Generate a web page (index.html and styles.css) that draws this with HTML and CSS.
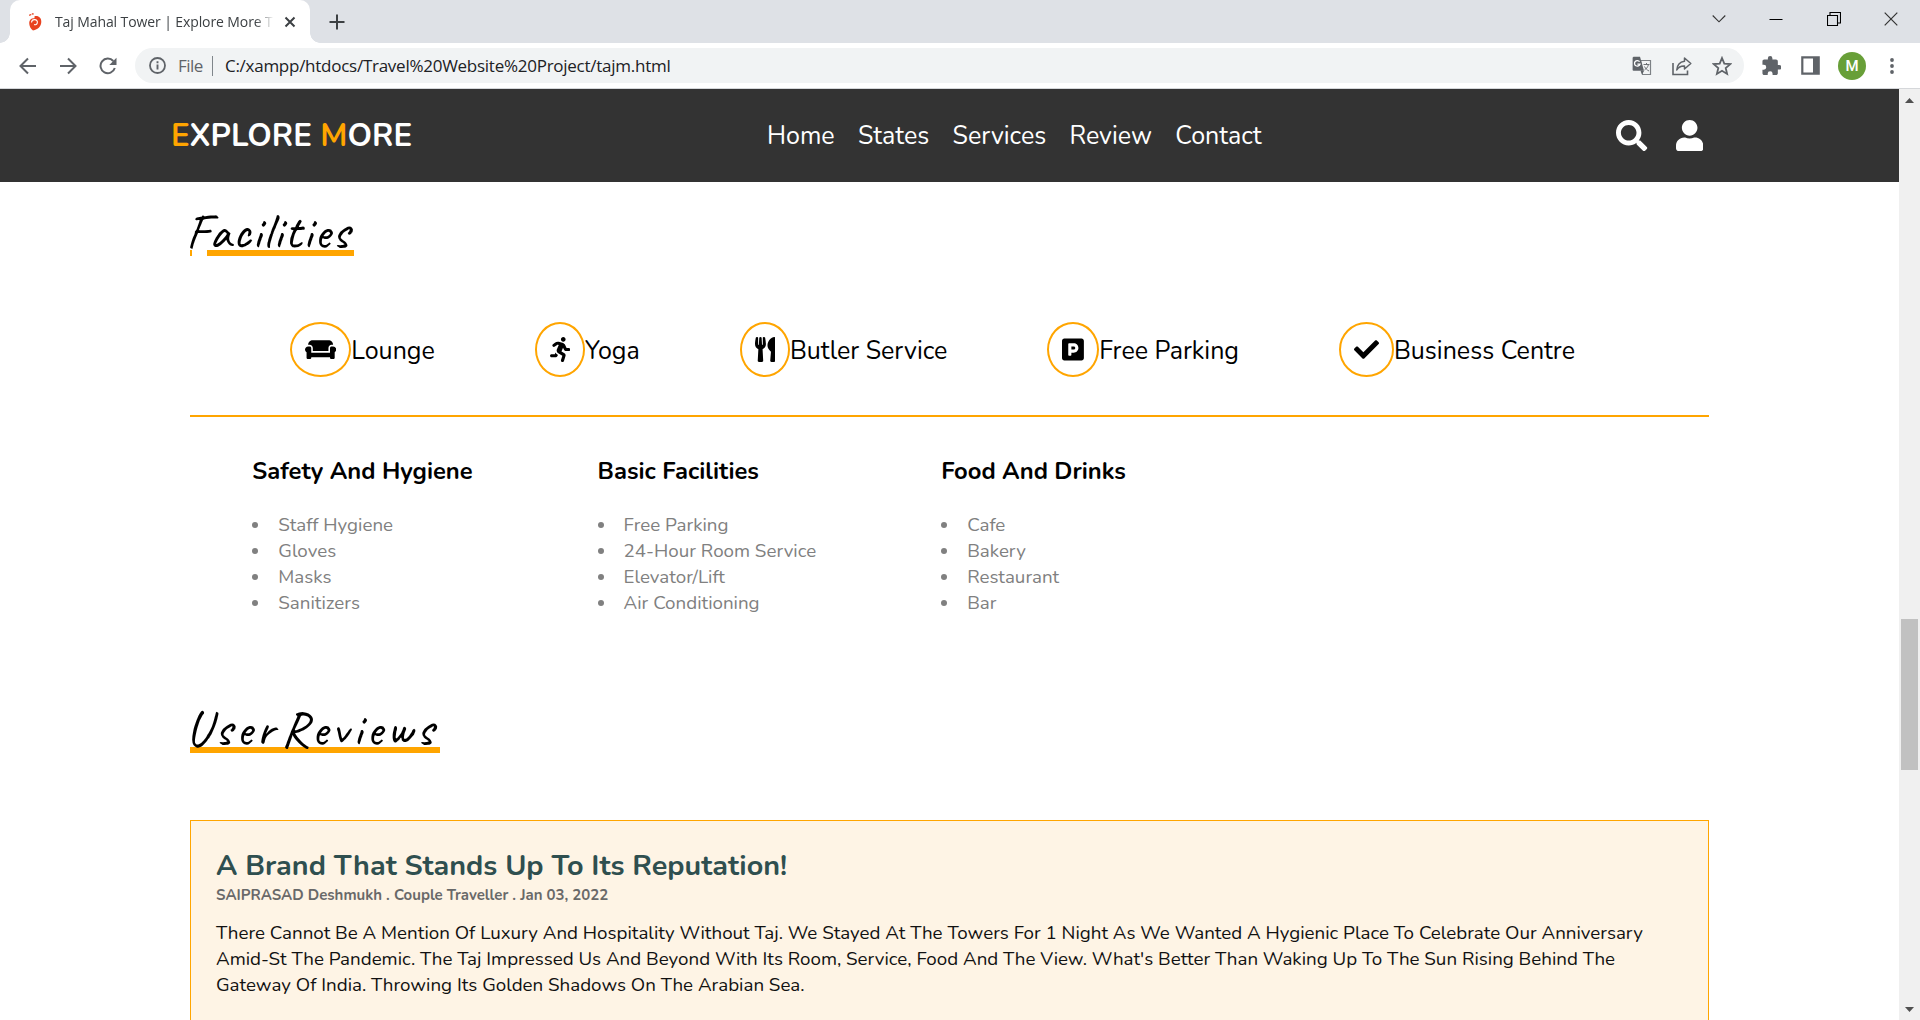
FILE: index.html
```html
<!DOCTYPE html>
<html lang="en">
<head>
<meta charset="utf-8">
<title>Taj Mahal Tower | Explore More</title>
<link rel="stylesheet" href="styles.css">
</head>
<body>
<div class="tabstrip">
  <div class="tab">
    <svg class="favicon" viewBox="0 0 14 18"><path d="M6.500 3.200C10.800 2.400 13.500 5 13.300 9c-.2 4-3 7.500-8.300 8.500C2.500 16 1.200 13 1.200 9.800c0-2.800 2-4.600 4.400-4.600 2.500 0 4 1.500 4 3.500S8.200 11.800 6.500 11.600" fill="#e8421f"/><path d="M3.500 9.500c.2-2 1.500-3 3.200-2.900 1.900.1 3 1.600 2.600 3.300-.3 1.500-1.800 2.300-3.200 1.700" fill="none" stroke="#fff" stroke-width="1.100"/><path d="M1.200 2.300l2-.8M3.800.8l1.800.2" stroke="#e8421f" stroke-width="1.300"/></svg>
    <span class="tab-title">Taj Mahal Tower | Explore More Tr</span>
    <svg class="tab-close" viewBox="0 0 12 12"><path d="M1.500 1.500l9 9M10.500 1.500l-9 9" stroke="#3c4043" stroke-width="2"/></svg>
  </div>
  <svg class="new-tab" viewBox="0 0 16 16"><path d="M8 0.500v15M.5 8h15" stroke="#3c4043" stroke-width="2"/></svg>
  <div class="controls">
    <svg width="14" height="14" viewBox="0 0 14 14"><path d="M.7 3.500L7 9.800l6.300-6.300" fill="none" stroke="#333" stroke-width="1.100"/></svg>
    <svg width="14" height="14" viewBox="0 0 14 14"><path d="M.5 7.500h13" stroke="#000"/></svg>
    <svg width="14" height="14" viewBox="0 0 14 14"><path d="M.5 3.500h10v10H.5zM3 3V.5h10.500v10.500H11" fill="none" stroke="#000" stroke-width="1.100"/></svg>
    <svg width="14" height="14" viewBox="0 0 14 14"><path d="M.7.7l12.600 12.600M13.300.7L.7 13.300" stroke="#333" stroke-width="1.200"/></svg>
  </div>
</div>
<div class="toolbar">
  <div class="nav-buttons">
    <svg width="18" height="18" viewBox="0 0 18 18"><path d="M17 9H2M9 1.500L1.500 9 9 16.500" fill="none" stroke="#5f6368" stroke-width="2"/></svg>
    <svg width="18" height="18" viewBox="0 0 18 18"><path d="M1 9h15M9 1.500L16.500 9 9 16.500" fill="none" stroke="#5f6368" stroke-width="2"/></svg>
    <svg width="18" height="18" viewBox="0 0 18 18"><path d="M15.800 11A7.300 7.300 0 1 1 14.300 4" fill="none" stroke="#5f6368" stroke-width="2"/><path d="M17.500.8v7.200h-7.200z" fill="#5f6368"/></svg>
  </div>
  <div class="omnibox">
    <svg width="17" height="17" viewBox="0 0 17 17"><circle cx="8.500" cy="8.500" r="7.500" fill="none" stroke="#5f6368" stroke-width="1.800"/><path d="M8.500 7.500v5M8.500 4.300v1.900" stroke="#5f6368" stroke-width="1.900"/></svg>
    <span class="scheme">File</span>
    <span class="divider"></span>
    <span class="url">C:/xampp/htdocs/Travel%20Website%20Project/tajm.html</span>
    <div class="omni-actions">
      <svg width="20" height="20" viewBox="0 0 20 20"><path d="M8.500 4.500h10v14h-8z" fill="#f1f3f4" stroke="#7d8185" stroke-width="1.200"/><path d="M1.500.8h6.500l4 14H1.500A1 1 0 0 1 .6 14V1.700z" fill="#5f6368"/><path d="M8.600 15l3.400 0-2 3.600z" fill="#5f6368"/><path d="M7.600 5.700A2.800 2.800 0 1 0 8 8.200H5.400" fill="none" stroke="#fff" stroke-width="1.300"/><path d="M11.500 8.500h6M14.500 7v1.500M16.500 8.500c-.8 3-2.500 4.500-4 5.500M12.500 10.500c1 2 2.500 3.500 4.500 4.500" fill="none" stroke="#6d7175"/></svg>
      <svg width="20" height="20" viewBox="0 0 20 20"><path d="M1 7v11.500h14.500v-4" fill="none" stroke="#5f6368" stroke-width="1.600"/><path d="M12.500 2l6.300 5.500-6.300 5.500V10C9 9.800 6.500 11 4.800 14c.3-5 3.200-8.200 7.700-8.800z" fill="none" stroke="#5f6368" stroke-width="1.500" stroke-linejoin="round"/></svg>
      <svg width="20" height="20" viewBox="0 0 20 20"><path d="M10 2l2.300 5.600 6 .5-4.600 3.900 1.400 5.900L10 14.800l-5.100 3.100L6.300 12 1.700 8.100l6-.5z" fill="none" stroke="#5f6368" stroke-width="1.800"/></svg>
    </div>
  </div>
  <div class="extensions">
    <svg width="19" height="19" viewBox="1.500 1 21 21"><path d="M20.500 11H19V7c0-1.100-.9-2-2-2h-4V3.500a2.500 2.500 0 0 0-5 0V5H4c-1.100 0-2 .9-2 2v3.800h1.500a2.700 2.700 0 0 1 0 5.400H2V20c0 1.100.9 2 2 2h3.800v-1.500a2.700 2.700 0 0 1 5.400 0V22H17c1.100 0 2-.9 2-2v-4h1.500a2.500 2.500 0 0 0 0-5z" fill="#5f6368"/></svg>
    <svg width="19" height="19" viewBox="0 0 19 19"><path d="M1.300 1.300h16.400v16.400H1.300z" fill="#fff" stroke="#5f6368" stroke-width="2.200"/><path d="M12 1h6v17h-6z" fill="#5f6368"/></svg>
    <span class="avatar">M</span>
    <svg class="dots" width="4" height="18" viewBox="0 0 4 18"><g fill="#5f6368"><circle cx="2" cy="3" r="1.900"/><circle cx="2" cy="9" r="1.900"/><circle cx="2" cy="15" r="1.900"/></g></svg>
  </div>
</div>
<div class="viewport">
  <div class="page">
    <header class="navbar">
      <a class="logo"><span>E</span>XPLORE <span>M</span>ORE</a>
      <nav><a>Home</a><a>States</a><a>Services</a><a>Review</a><a>Contact</a></nav>
      <div class="icons">
        <svg width="31.250" height="31.250" viewBox="0 0 512 512"><path d="M505 442.700L405.300 343c-4.500-4.500-10.600-7-17-7H372c27.600-35.300 44-79.700 44-128C416 93.100 322.900 0 208 0S0 93.100 0 208s93.100 208 208 208c48.300 0 92.700-16.400 128-44v16.300c0 6.400 2.500 12.500 7 17l99.700 99.700c9.400 9.400 24.600 9.400 33.900 0l28.300-28.300c9.400-9.400 9.400-24.600.1-34zM208 336c-70.700 0-128-57.200-128-128 0-70.700 57.200-128 128-128 70.700 0 128 57.200 128 128 0 70.700-57.200 128-128 128z"/></svg>
        <svg width="27.340" height="31.250" viewBox="0 0 448 512"><path d="M224 256c70.700 0 128-57.300 128-128S294.700 0 224 0 96 57.300 96 128s57.300 128 128 128zm89.600 32h-16.700c-22.200 10.200-46.900 16-72.900 16s-50.600-5.800-72.900-16h-16.700C60.200 288 0 348.200 0 422.400V464c0 26.500 21.500 48 48 48h352c26.500 0 48-21.500 48-48v-41.600c0-74.200-60.200-134.400-134.400-134.400z"/></svg>
      </div>
    </header>
    <main>
      <h1 class="heading heading-facilities">Facilities</h1>
      <div class="facilities">
        <div class="facility"><span class="badge"><svg width="31.250" height="25" viewBox="0 0 640 512"><path d="M160 224v64h320v-64c0-35.300 28.700-64 64-64h32c0-53-43-96-96-96H160c-53 0-96 43-96 96h32c35.300 0 64 28.700 64 64zm416-32h-32c-17.700 0-32 14.300-32 32v96H128v-96c0-17.700-14.300-32-32-32H64c-35.300 0-64 28.700-64 64 0 23.600 13 44 32 55.100V432c0 8.800 7.200 16 16 16h64c8.800 0 16-7.200 16-16v-16h384v16c0 8.800 7.200 16 16 16h64c8.800 0 16-7.200 16-16V311.100c19-11.100 32-31.500 32-55.100 0-35.300-28.700-64-64-64z"/></svg></span><span class="label">Lounge</span></div>
        <div class="facility"><span class="badge"><svg width="20.310" height="25" viewBox="0 0 416 512"><path d="M272 96c26.510 0 48-21.490 48-48S298.510 0 272 0s-48 21.490-48 48 21.490 48 48 48zM113.690 317.470l-14.800 34.520H32c-17.670 0-32 14.330-32 32s14.330 32 32 32h77.450c19.250 0 36.580-11.440 44.110-29.090l8.790-20.520-10.670-6.300c-17.320-10.230-30.060-25.370-37.990-42.610zM384 223.990h-44.030l-26.060-53.250c-12.500-25.550-35.450-44.230-61.780-50.940l-71.080-21.140c-28.300-6.800-57.770-.55-80.840 17.140l-39.670 30.410c-14.030 10.750-16.690 30.830-5.940 44.860s30.840 16.690 44.860 5.940l39.660-30.410c7.670-5.890 17.440-8 25.270-6.140l14.700 4.370-37.460 87.390c-12.620 29.480-1.310 64.010 26.300 80.310l84.980 50.170-27.470 87.730c-5.280 16.860 4.110 34.820 20.970 40.090 3.190 1 6.410 1.480 9.580 1.480 13.610 0 26.230-8.770 30.520-22.450l31.640-101.060c5.910-20.770-2.890-43.080-21.640-54.390l-61.240-36.140 31.310-78.280 20.270 41.430c8 16.340 24.920 26.890 43.110 26.890H384c17.670 0 32-14.330 32-32s-14.330-31.990-32-31.990z"/></svg></span><span class="label">Yoga</span></div>
        <div class="facility"><span class="badge"><svg width="20.310" height="25" viewBox="0 0 416 512"><path d="M207.900 15.200c.8 4.700 16.100 94.500 16.100 128.800 0 52.300-27.800 89.600-68.900 104.600L168 486.700c.7 13.700-10.200 25.300-24 25.300H80c-13.700 0-24.700-11.500-24-25.300l12.900-238.100C27.700 233.600 0 196.200 0 144 0 109.600 15.300 19.900 16.100 15.200 19.300-5.100 61.400-5.400 64 16.300v141.200c1.300 3.400 15.100 3.200 16 0 1.400-25.300 7.900-139.200 8-141.800 3.300-20.800 44.700-20.800 47.900 0 .2 2.700 6.600 116.500 8 141.800.9 3.200 14.800 3.400 16 0V16.300c2.600-21.600 44.800-21.400 47.900-1.100zm119.200 285.700l-15 185.100c-1.200 14 9.900 26 23.900 26h56c13.300 0 24-10.700 24-24V24c0-13.200-10.700-24-24-24-82.500 0-221.400 178.500-64.900 300.900z"/></svg></span><span class="label">Butler Service</span></div>
        <div class="facility"><span class="badge"><svg width="21.880" height="25" viewBox="0 0 448 512"><path d="M400 32H48C21.500 32 0 53.500 0 80v352c0 26.500 21.500 48 48 48h352c26.500 0 48-21.500 48-48V80c0-26.500-21.500-48-48-48zM240 320h-48v48c0 8.800-7.200 16-16 16h-32c-8.800 0-16-7.200-16-16V144c0-8.800 7.200-16 16-16h96c52.900 0 96 43.100 96 96s-43.100 96-96 96zm0-128h-48v64h48c17.600 0 32-14.400 32-32s-14.400-32-32-32z"/></svg></span><span class="label">Free Parking</span></div>
        <div class="facility"><span class="badge"><svg width="25" height="25" viewBox="0 0 512 512"><path d="M173.898 439.404l-166.400-166.400c-9.997-9.997-9.997-26.206 0-36.204l36.203-36.204c9.997-9.998 26.207-9.998 36.204 0L192 312.690 432.095 72.596c9.997-9.997 26.207-9.997 36.204 0l36.203 36.204c9.997 9.997 9.997 26.206 0 36.204l-294.400 294.401c-9.998 9.997-26.207 9.997-36.204-.001z"/></svg></span><span class="label">Business Centre</span></div>
      </div>
      <div class="columns">
        <section><h3>Safety And Hygiene</h3><ul><li>Staff Hygiene</li><li>Gloves</li><li>Masks</li><li>Sanitizers</li></ul></section>
        <section><h3>Basic Facilities</h3><ul><li>Free Parking</li><li>24-Hour Room Service</li><li>Elevator/Lift</li><li>Air Conditioning</li></ul></section>
        <section><h3>Food And Drinks</h3><ul><li>Cafe</li><li>Bakery</li><li>Restaurant</li><li>Bar</li></ul></section>
      </div>
      <h1 class="heading heading-reviews">User Reviews</h1>
      <article class="review">
        <h2>A Brand That Stands Up To Its Reputation!</h2>
        <h5>SAIPRASAD Deshmukh . Couple Traveller . Jan 03, 2022</h5>
        <p>There Cannot Be A Mention Of Luxury And Hospitality Without Taj. We Stayed At The Towers For 1 Night As We Wanted A Hygienic Place To Celebrate Our Anniversary Amid-St The Pandemic. The Taj Impressed Us And Beyond With Its Room, Service, Food And The View. What's Better Than Waking Up To The Sun Rising Behind The Gateway Of India. Throwing Its Golden Shadows On The Arabian Sea.</p>
      </article>
    </main>
  </div>
  <div class="scrollbar">
    <svg width="9" height="5" viewBox="0 0 9 5"><path d="M0 5L4.500 0 9 5z" fill="#505050"/></svg>
    <div class="thumb"></div>
    <svg class="down" width="9" height="5" viewBox="0 0 9 5"><path d="M0 0h9L4.500 5z" fill="#505050"/></svg>
  </div>
</div>
</body>
</html>
```
FILE: styles.css
```css
* { box-sizing: border-box; margin: 0; padding: 0; }
body {
  width: 1920px; height: 1020px; overflow: hidden;
  display: flex; flex-direction: column;
  background: #fff; font-family: Nunito, Lato, sans-serif; color: #000;
}
svg { display: block; flex: none; }

/* Browser tab strip */
.tabstrip { height: 43px; flex: none; display: flex; align-items: center; background: #dee1e6; padding: 0 22px 0 10px; font-family: "Open Sans", "Noto Sans", sans-serif; }
.tab { position: relative; width: 300px; height: 43px; background: #fff; border-radius: 10px 10px 0 0; display: flex; align-items: center; padding: 0 14px 0 18px; }
.tab::before, .tab::after { content: ""; position: absolute; bottom: 0; width: 10px; height: 10px; }
.tab::before { left: -10px; background: radial-gradient(circle at 0 0, transparent 9.500px, #fff 10px); }
.tab::after { right: -10px; background: radial-gradient(circle at 100% 0, transparent 9.500px, #fff 10px); }
.favicon { width: 14px; height: 18px; margin-right: 13px; }
.tab-title { width: 219px; overflow: hidden; white-space: nowrap; font-size: 14px; letter-spacing: -0.100px; color: #3c4043; -webkit-mask-image: linear-gradient(90deg, #000 200px, transparent 219px); mask-image: linear-gradient(90deg, #000 200px, transparent 219px); }
.tab-close { width: 12px; height: 12px; margin-left: auto; }
.new-tab { width: 16px; height: 16px; margin-left: 19px; }
.controls { margin-left: auto; display: flex; gap: 43.500px; padding-bottom: 6px; }

/* Browser toolbar */
.toolbar { height: 46px; flex: none; display: flex; align-items: center; background: #fff; border-bottom: 1px solid #d5d7da; padding: 0 26px 0 19px; font-family: "Open Sans", "Noto Sans", sans-serif; }
.nav-buttons { display: flex; gap: 22px; width: 116px; }
.omnibox { width: 1610px; height: 35px; border-radius: 18px; background: #f1f3f4; display: flex; align-items: center; padding: 0 12px 0 14px; font-size: 17px; color: #202124; }
.scheme { margin-left: 12px; width: 26px; color: #5f6368; letter-spacing: -0.500px; }
.divider { width: 1px; height: 20px; background: #80868b; margin: 0 12px 0 8px; }
.url { letter-spacing: -0.260px; white-space: nowrap; }
.omni-actions { margin-left: auto; display: flex; gap: 20px; }
.extensions { flex: 1; display: flex; align-items: center; margin-left: 18px; gap: 20px; }
.avatar { width: 28px; height: 28px; margin-left: -2px; border-radius: 50%; background: #689f38; color: #fff; font: 500 15px/28px Roboto, sans-serif; text-align: center; }
.dots { margin-left: 4px; }

/* Page viewport */
.viewport { flex: 1; min-height: 0; display: flex; }
.page { width: 1899px; overflow: hidden; }
.scrollbar { width: 21px; background: #f0f0f0; display: flex; flex-direction: column; align-items: center; padding: 9px 0 8px; }
.thumb { width: 17px; height: 151px; margin-top: 516px; background: #c1c1c1; }
.down { margin-top: auto; }

.navbar { height: 93px; background: #333; display: flex; align-items: center; padding: 0 196px 0 171px; color: #fff; }
.logo { width: 596px; font-size: 31.250px; font-weight: 700; white-space: nowrap; }
.logo span { color: orange; }
nav { display: flex; gap: 23.300px; padding-top: 1px; font-size: 25px; }
.icons { margin-left: auto; display: flex; gap: 28px; fill: #fff; }

main { padding: 20px 190px 0; }

/* Handwritten headings with a thick orange underline */
.heading { height: 54px; padding-top: 5px; text-indent: -4px; font: 500 50px/50px Caveat, cursive; white-space: nowrap; background: linear-gradient(orange, orange) no-repeat 0 100% / 100% 6px; }
.heading-facilities { width: 164px; letter-spacing: 1.700px; background: linear-gradient(90deg, orange 2px, transparent 2px 17px, orange 17px) no-repeat 0 100% / 100% 6px; }
.heading-reviews { width: 250px; letter-spacing: 4px; word-spacing: -13px; }

.facilities { height: 161px; border-bottom: 2px solid orange; display: flex; gap: 99.900px; padding: 66px 0 0 100px; font-size: 25px; }
.facility { display: flex; align-items: center; height: 55px; white-space: nowrap; }
.label { padding-top: 2px; }
.badge { height: 55px; padding: 13px; border: 2px solid orange; border-radius: 50%; }
.columns { display: flex; gap: 125px; padding: 37px 0 0 62.300px; height: 282px; white-space: nowrap; }
h3 { font-size: 23.750px; line-height: 34px; font-weight: 700; margin-bottom: 24px; }
ul { list-style: none; font-size: 18.750px; line-height: 26px; color: #808080; }
li { display: flex; align-items: center; gap: 20px; }
li::before { content: ""; width: 6px; height: 6px; border-radius: 50%; background: #808080; }
.review { margin-top: 67px; height: 300px; border: 1px solid orange; background: #fef4e5; padding: 26px 25px 0; }
.review h2 { font-size: 28.750px; line-height: 38px; color: darkslategray; }
.review h5 { font-size: 15px; line-height: 20px; color: #696969; }
.review p { margin-top: 15px; font-size: 18.750px; line-height: 26px; color: #111; }
```
